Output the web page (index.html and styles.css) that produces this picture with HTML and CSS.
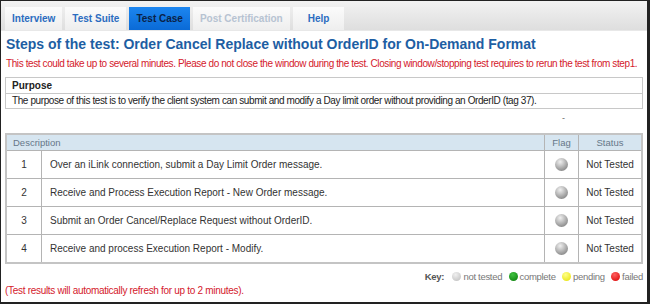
FILE: index.html
```html
<!DOCTYPE html>
<html>
  <head>
    <title>Test Case</title>
    <link rel="stylesheet" href="styles.css">
  </head>

  <body>
    <div class="frame">
      <div class="tabs">
        <a class="tab" href="#">Interview</a>
        <a class="tab" href="#">Test Suite</a>
        <a class="tab active" href="#">Test Case</a>
        <a class="tab disabled" href="#">Post Certification</a>
        <a class="tab" href="#">Help</a>
      </div>

      <div class="content">
        <h1 class="title">Steps of the test: Order Cancel Replace without OrderID for On-Demand Format</h1>
        <p class="warning">This test could take up to several minutes. Please do not close the window during the test. Closing window/stopping test requires to rerun the test from step1.</p>

        <div class="purpose">
          <div class="purpose-head">Purpose</div>
          <div class="purpose-body">The purpose of this test is to verify the client system can submit and modify a Day limit order without providing an OrderID (tag 37).</div>
        </div>

        <div class="dash">-</div>

        <table class="steps">
          <tr>
            <th colspan="2" class="desc-head">Description</th>
            <th class="flag-col">Flag</th>
            <th class="status-col">Status</th>
          </tr>
          <tr>
            <td class="num">1</td>
            <td>Over an iLink connection, submit a Day Limit Order message.</td>
            <td class="flag"><span class="ball"></span></td>
            <td class="status">Not Tested</td>
          </tr>
          <tr>
            <td class="num">2</td>
            <td>Receive and Process Execution Report - New Order message.</td>
            <td class="flag"><span class="ball"></span></td>
            <td class="status">Not Tested</td>
          </tr>
          <tr>
            <td class="num">3</td>
            <td>Submit an Order Cancel/Replace Request without OrderID.</td>
            <td class="flag"><span class="ball"></span></td>
            <td class="status">Not Tested</td>
          </tr>
          <tr>
            <td class="num">4</td>
            <td>Receive and process Execution Report - Modify.</td>
            <td class="flag"><span class="ball"></span></td>
            <td class="status">Not Tested</td>
          </tr>
        </table>

        <div class="key">
          <b>Key:</b>
          <span class="dot grey"></span>not tested
          <span class="dot green"></span>complete
          <span class="dot yellow"></span>pending
          <span class="dot red"></span>failed
        </div>

        <p class="refresh">(Test results will automatically refresh for up to 2 minutes).</p>
      </div>
    </div>
  </body>
</html>
```

FILE: styles.css
```css
/* page frame */

body {
  margin: 0;
  font-family: "Liberation Sans", Arial, sans-serif;
  background-color: #fff;
}

.frame {
  box-sizing: border-box;
  width: 650px;
  height: 304px;
  border-style: solid;
  border-color: #222;
  border-width: 1px 3px 2px 1px;
  overflow: hidden;
}

/* tab bar */

.tabs {
  height: 29px;
  display: flex;
  align-items: flex-end;
  gap: 3px;
  padding-left: 4px;
  background: linear-gradient(#f2f2f2, #dedede);
  border-bottom: 1px solid #e8e8e8;
}

.tab {
  height: 23px;
  display: flex;
  align-items: center;
  padding: 0 7px;
  background: linear-gradient(#fbfbfb, #eeeeee);
  color: #2b6cc0;
  font-size: 10px;
  font-weight: bold;
  text-decoration: none;
}

.tab.active {
  background: linear-gradient(#1c86f0, #0a6ad6);
  color: #0b2247;
}

.tab.disabled {
  color: #b7c3d2;
}

.tab:last-child {
  padding: 0 15px;
}

/* main content */

.content {
  padding: 0 4px 0 4px;
}

.title {
  margin: 5px 0 0 1px;
  font-size: 14px;
  line-height: 16px;
  color: #1d5ea3;
}

.warning {
  margin: 6px 0 0 1px;
  font-size: 10px;
  line-height: 12px;
  letter-spacing: -0.4px;
  color: #d4202c;
}

.purpose {
  margin-top: 7px;
  border: 1px solid #c8c8c8;
  font-size: 10px;
  letter-spacing: -0.4px;
  color: #222;
}

.purpose-head {
  font-weight: bold;
  letter-spacing: 0;
  height: 15px;
  line-height: 15px;
  padding: 0 6px;
  border-bottom: 1px solid #c8c8c8;
}

.purpose-body {
  height: 14px;
  line-height: 14px;
  padding: 0 6px;
}

.dash {
  text-align: right;
  padding-right: 78px;
  font-size: 9px;
  color: #666;
  height: 24px;
  line-height: 18px;
}

/* steps table */

.steps {
  width: 638px;
  border-collapse: collapse;
  border: 2px solid #c4c4c4;
  font-size: 10px;
  color: #333;
}

.steps th {
  height: 15px;
  padding: 0;
  background-color: #d6e5f0;
  color: #667788;
  font-weight: normal;
  font-size: 9.5px;
  border: 1px solid #b4b4b4;
}

.steps .desc-head {
  text-align: left;
  padding-left: 6px;
}

.steps td {
  height: 27px;
  border: 1px solid #b4b4b4;
  padding: 0 8px;
}

.steps .num {
  width: 18px;
  text-align: center;
}

.flag-col {
  width: 33px;
}

.status-col {
  width: 62px;
}

.steps .flag {
  text-align: center;
  padding: 0;
}

.steps .status {
  text-align: center;
  padding: 0;
}

.ball {
  display: inline-block;
  width: 13px;
  height: 13px;
  border-radius: 50%;
  vertical-align: middle;
  background: radial-gradient(circle at 40% 30%, #f0f0f0, #a8a8a8 55%, #6e6e6e);
}

/* colour key */

.key {
  text-align: right;
  margin-top: 7px;
  font-size: 9.5px;
  line-height: 12px;
  letter-spacing: -0.3px;
  color: #777;
}

.key b {
  color: #555;
  margin-right: 2px;
}

.dot {
  display: inline-block;
  width: 9px;
  height: 9px;
  border-radius: 50%;
  vertical-align: -1px;
  margin-left: 4px;
  margin-right: 2px;
}

.dot.grey {
  background: radial-gradient(circle at 40% 30%, #f0f0f0, #bbbbbb);
}

.dot.green {
  background: radial-gradient(circle at 40% 30%, #3fc23f, #0a7a0a);
}

.dot.yellow {
  background: radial-gradient(circle at 40% 30%, #ffff8a, #e5e000);
}

.dot.red {
  background: radial-gradient(circle at 40% 30%, #ff6060, #d80000);
}

.refresh {
  margin: 2px 0 0 0;
  font-size: 10px;
  line-height: 12px;
  letter-spacing: -0.3px;
  color: #d4202c;
}
```
